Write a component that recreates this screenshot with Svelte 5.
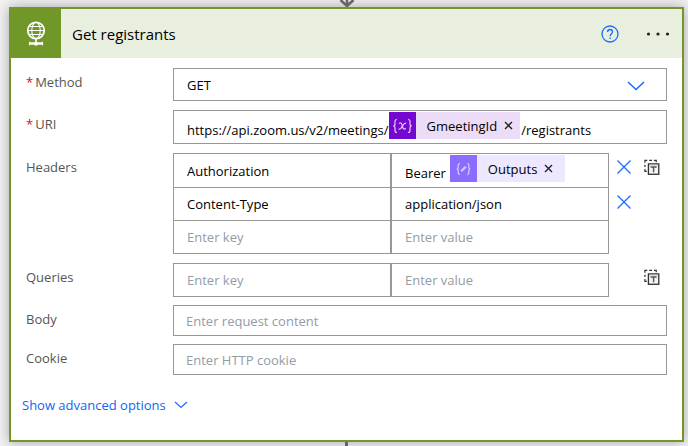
<script>
  let method = $state('GET');
  let uriStart = $state('https://api.zoom.us/v2/meetings/');
  let uriEnd = $state('/registrants');
  let authPrefix = $state('Bearer');
  let body = $state('');
  let cookie = $state('');
  let headers = $state([
    { key: 'Authorization', value: '', token: true },
    { key: 'Content-Type', value: 'application/json' },
    { key: '', value: '' }
  ]);
  let query = $state({ key: '', value: '' });
</script>

{#snippet chevron(w, h, stroke)}
  <svg class="chevron" width={w} height={h} viewBox="0 0 {w} {h}" fill="none" stroke="#1a6dff" stroke-width={stroke} aria-hidden="true">
    <path d="M1 1 L{w / 2} {h - 1.5} L{w - 1} 1" />
  </svg>
{/snippet}

{#snippet token(kind, name)}
  <span class="token {kind}">
    <span class="token-icon">
      <svg width="21" height="16" viewBox="0 0 21 16" fill="none" stroke="currentColor" stroke-width="1.2" aria-hidden="true">
        {#if kind === 'variable'}
          <path d="M5 1.5C3.300 1.500 3 2.200 3 3.500V6C3 7.300 2.500 8 1.200 8C2.500 8 3 8.700 3 10V12.500C3 13.800 3.300 14.500 5 14.500" />
          <path d="M16 1.500C17.700 1.500 18 2.200 18 3.500V6C18 7.300 18.500 8 19.800 8C18.500 8 18 8.700 18 10V12.500C18 13.800 17.700 14.500 16 14.500" />
          <path d="M7 5.500C9 4 9.700 5.300 10.300 8C10.900 10.700 11.800 12 13.800 10.300M14.200 5.300C12.500 4.600 11.500 6.500 10.300 8.200C9 10.200 8 11.800 6.600 10.800" />
        {:else}
          <path d="M7 2.500C5.300 2.500 5.200 3 5.200 4.200V6.300C5.200 7.500 4.700 8 3.700 8C4.700 8 5.200 8.500 5.200 9.700V11.800C5.200 13 5.300 13.500 7 13.500" />
          <path d="M14 2.500C15.700 2.500 15.800 3 15.800 4.200V6.300C15.800 7.500 16.300 8 17.300 8C16.300 8 15.800 8.500 15.800 9.700V11.800C15.800 13 15.700 13.500 14 13.500" />
          <path d="M8 10.500L8.500 8.700L12 5.200L13.200 6.400L9.700 9.900Z" fill="currentColor" stroke-width="0.600" />
        {/if}
      </svg>
    </span>
    <span class="token-name">{name}</span>
    <button type="button" class="token-remove" aria-label="Remove {name}">
      <svg width="9" height="9" viewBox="0 0 9 9" stroke="#222" stroke-width="1.400" aria-hidden="true"><path d="M1 1L8 8M8 1L1 8" /></svg>
    </button>
  </span>
{/snippet}

{#snippet textMode()}
  <button type="button" class="mode" aria-label="Switch to text mode">
    <svg width="17" height="17" viewBox="0 0 17 17" fill="none" stroke="#333" aria-hidden="true">
      <path d="M1 3.500V1H3.500M5.500 1H8.500M10.500 1H13V3M1 5.500V8M1 10V12.500H3" stroke-width="1.300" />
      <rect x="4.700" y="4.700" width="11" height="11" fill="#f4f4f4" stroke-width="1.400" />
      <path d="M5.500 5.800H15" stroke="#bbb" />
      <path d="M7 8H13.400M10.200 8V13.500" stroke="#555" stroke-width="1.500" />
    </svg>
  </button>
{/snippet}

<main>
  <div class="connector top">
    <svg width="16" height="7" viewBox="0 0 16 7" aria-hidden="true">
      <path d="M8 0V5M1.500 0L8 6L14.500 0" fill="none" stroke="#666" stroke-width="2.600" />
    </svg>
  </div>

  <section class="card">
    <header>
      <div class="logo">
        <svg width="20" height="26" viewBox="0 0 20 26" fill="none" stroke="#fff" aria-hidden="true">
          <circle cx="10" cy="9.500" r="8.200" stroke-width="1.700" />
          <ellipse cx="10" cy="9.500" rx="4.200" ry="8.200" stroke-width="1.100" />
          <path d="M3.500 5.500H16.500M2 9.500H18M3.500 13.500H16.500" stroke-width="1.100" />
          <path d="M10 18V21" stroke-width="1.600" />
          <path d="M4 22.500H16" stroke-width="2.400" />
          <path d="M3.500 20.800V24.200M16.500 20.800V24.200" stroke-width="1.200" />
          <circle cx="10" cy="22.800" r="2" fill="#fff" stroke="none" />
        </svg>
      </div>
      <h1>Get registrants</h1>
      <button type="button" class="help" aria-label="Help">
        <svg width="18" height="18" viewBox="0 0 18 18" fill="none" stroke="#1a6dff" stroke-width="1.300" aria-hidden="true">
          <circle cx="9" cy="9" r="8" />
          <path d="M6.600 7C6.600 5.300 7.600 4.500 9.100 4.500S11.500 5.400 11.500 6.800C11.500 8.700 9.100 8.800 9.100 11.200M9.100 12.600V14" />
        </svg>
      </button>
      <button type="button" class="more" aria-label="More options">
        <svg width="24" height="4" viewBox="0 0 24 4" fill="#222" aria-hidden="true">
          <circle cx="2.500" cy="2" r="1.600" /><circle cx="12" cy="2" r="1.600" /><circle cx="21.500" cy="2" r="1.600" />
        </svg>
      </button>
    </header>

    <form>
      <div class="row">
        <label for="method"><span class="req">*</span>Method</label>
        <div class="control select">
          <select id="method" bind:value={method}>
            <option>GET</option><option>POST</option><option>PUT</option><option>PATCH</option><option>DELETE</option>
          </select>
          {@render chevron(18, 10, 1.6)}
        </div>
      </div>

      <div class="row">
        <label for="uri"><span class="req">*</span>URI</label>
        <div class="control box tokens">
          <input id="uri" class="fit" bind:value={uriStart} />
          {@render token('variable', 'GmeetingId')}
          <input class="rest" aria-label="URI, continued" bind:value={uriEnd} />
        </div>
      </div>

      <div class="row">
        <label for="header-key-0">Headers</label>
        <div class="control pairs">
          <div class="grid">
            {#each headers as header, i}
              <div class="pair">
                <div class="box"><input id="header-key-{i}" aria-label={i ? 'Header key' : undefined} placeholder="Enter key" bind:value={header.key} /></div>
                {#if header.token}
                  <div class="box tokens">
                    <input class="fit" aria-label="Header value" bind:value={authPrefix} />
                    {@render token('output', 'Outputs')}
                    <input class="rest" aria-label="Header value, continued" bind:value={header.value} />
                  </div>
                {:else}
                  <div class="box"><input aria-label="Header value" placeholder="Enter value" bind:value={header.value} /></div>
                {/if}
              </div>
            {/each}
          </div>
          <div class="removes">
            {#each headers.slice(0, 2) as header}
              <button type="button" aria-label="Delete {header.key}">
                <svg width="14" height="14" viewBox="0 0 14 14" stroke="#1a6dff" stroke-width="1.300" aria-hidden="true"><path d="M.5 .5L13.500 13.500M13.500 .5L.5 13.500" /></svg>
              </button>
            {/each}
          </div>
          {@render textMode()}
        </div>
      </div>

      <div class="row tight">
        <label for="query-key">Queries</label>
        <div class="control pairs">
          <div class="grid">
            <div class="pair">
              <div class="box"><input id="query-key" placeholder="Enter key" bind:value={query.key} /></div>
              <div class="box"><input aria-label="Query value" placeholder="Enter value" bind:value={query.value} /></div>
            </div>
          </div>
          <div class="removes"></div>
          {@render textMode()}
        </div>
      </div>

      <div class="row tight single">
        <label for="body">Body</label>
        <div class="control box"><input id="body" placeholder="Enter request content" bind:value={body} /></div>
      </div>

      <div class="row tight single">
        <label for="cookie">Cookie</label>
        <div class="control box"><input id="cookie" placeholder="Enter HTTP cookie" bind:value={cookie} /></div>
      </div>

      <button type="button" class="advanced">
        Show advanced options
        {@render chevron(14, 8, 1.2)}
      </button>
    </form>
  </section>

  <div class="connector bottom"></div>
</main>

<style>
  :global(body) {
    margin: 0;
    background: #f2f2f2;
  }
  main {
    padding: 0 4px 0 9px;
    font: 13px/20px "Open Sans", "Noto Sans", sans-serif;
    color: #000;
    overflow: hidden;
  }
  .connector {
    display: flex;
    justify-content: center;
    height: 7px;
  }
  .connector.bottom {
    height: 5px;
  }
  .connector.bottom::before {
    content: "";
    position: relative;
    width: 3px;
    background: #666;
  }
  .connector svg {
    display: block;
    position: relative;
  }
  .card {
    border: 2px solid #709727;
    background: #fff;
    box-shadow: 0 0 12px rgba(0, 0, 0, 0.32);
  }
  button {
    display: flex;
    align-items: center;
    justify-content: center;
    padding: 0;
    border: 0;
    background: none;
    font: inherit;
    cursor: pointer;
  }
  header {
    display: flex;
    align-items: center;
    height: 49px;
    padding-right: 12px;
    background: #e9efdf;
  }
  .logo {
    display: flex;
    align-items: center;
    justify-content: center;
    align-self: stretch;
    width: 50px;
    background: #709727;
  }
  h1 {
    flex: 1;
    margin: 0 0 0 11px;
    font-size: 15px;
    font-weight: 400;
  }
  .help {
    margin-right: 27px;
  }
  form {
    padding: 10px 15px 25px;
  }
  .row {
    display: flex;
    margin-bottom: 9px;
  }
  .row.tight {
    margin-bottom: 8px;
  }
  label {
    flex: 0 0 147px;
    padding-top: 4px;
    color: #555;
  }
  .req {
    margin-right: 2px;
    color: #e00b1c;
  }
  .control {
    flex: 1;
    min-width: 0;
  }
  .box,
  .select {
    display: flex;
    box-sizing: border-box;
    min-height: 33px;
    border: 1px solid #979797;
    background: #fff;
  }
  .single .box {
    min-height: 31px;
  }
  .select {
    position: relative;
  }
  .select .chevron {
    position: absolute;
    right: 21px;
    top: 12px;
    pointer-events: none;
  }
  select,
  input {
    appearance: none;
    box-sizing: border-box;
    flex: 1;
    width: 100%;
    min-width: 0;
    border: 0;
    border-radius: 0;
    margin: 0;
    padding: 0 13px;
    outline: none;
    background: none;
    color: #000;
    font: inherit;
  }
  .single input {
    padding: 0 12px;
  }
  input::placeholder {
    color: #959ba3;
    opacity: 1;
  }
  .tokens {
    align-items: flex-start;
    min-height: 34px;
    padding: 1px 0 0 13px;
  }
  .tokens input {
    padding: 8px 0 0;
  }
  .tokens .fit {
    flex: none;
    width: auto;
    field-sizing: content;
  }
  .tokens .rest {
    margin-left: 1px;
  }
  .token {
    display: flex;
    align-items: center;
    flex: none;
    height: 27px;
  }
  .token-icon {
    display: flex;
    align-items: center;
    justify-content: center;
    width: 27px;
    height: 27px;
  }
  .token-name {
    padding-left: 11px;
  }
  .token-remove {
    padding: 0 7px 0 7px;
  }
  .token.variable {
    background: #ecdcf8;
  }
  .variable .token-icon {
    background: #7408d0;
    color: #e4c8f8;
  }
  .token.output {
    margin-left: 4px;
    background: #ede7ff;
  }
  .output .token-icon {
    background: #8c6cff;
    color: #d8ccff;
  }
  .output .token-remove {
    padding-right: 12px;
  }
  .pairs {
    display: flex;
  }
  .grid {
    flex: 1;
    min-width: 0;
  }
  .pair {
    display: grid;
    grid-template-columns: 1fr 1fr;
  }
  .pair + .pair {
    margin-top: -1px;
  }
  .pair .box {
    min-height: 34px;
  }
  .pair .tokens {
    min-height: 35px;
  }
  .removes {
    display: flex;
    flex-direction: column;
    gap: 15px;
    width: 35px;
    padding: 4px 0 0 7px;
    box-sizing: border-box;
  }
  .removes button {
    width: 16px;
    height: 20px;
  }
  .mode {
    align-self: flex-start;
    width: 16px;
    height: 20px;
    margin: 4px 7px 0 0;
  }
  .advanced {
    gap: 8px;
    margin: 20px 0 0 -4px;
    color: #0f66f5;
  }
</style>
